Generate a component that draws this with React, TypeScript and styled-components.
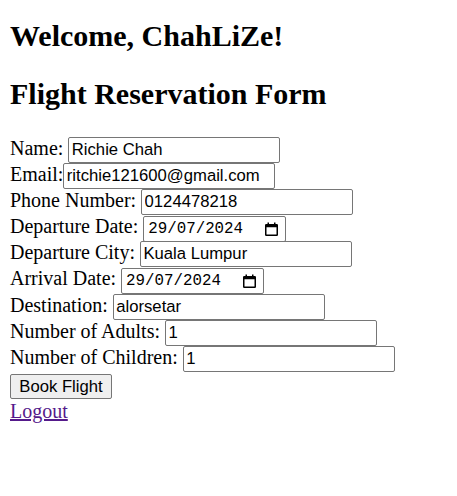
import React from "react";
import styled, { createGlobalStyle } from "styled-components";

const Global = createGlobalStyle`
  html, body {
    margin: 0;
    padding: 0;
    background: #fff;
  }
  body {
    font-family: "Liberation Serif", "Times New Roman", serif;
    font-size: 20px;
    color: #000;
  }
`;

const Page = styled.div`
  padding: 18px 10px 0;
`;

const Heading = styled.h2<{ $last?: boolean }>`
  font-size: 30px;
  font-weight: bold;
  line-height: 35px;
  margin: 0 0 ${(p) => (p.$last ? "26px" : "23px")};
`;

const Form = styled.form`
  margin: 0;
`;

const Row = styled.div`
  white-space: nowrap;
  line-height: normal;
  height: 26.1px;
`;

const Label = styled.label``;

const TextField = styled.input`
  font-family: "Liberation Sans", Arial, sans-serif;
  font-size: 16.67px;
  color: #000;
  width: 212px;
  height: 26px;
  box-sizing: border-box;
  padding: 0 2.5px;
  border: 1px solid #767676;
  border-radius: 2px;
  background: #fff;
  vertical-align: baseline;
  margin: 0;
  outline: none;
  &::-webkit-inner-spin-button,
  &::-webkit-outer-spin-button {
    -webkit-appearance: none;
    margin: 0;
  }
`;

const DateBox = styled.span`
  display: inline-flex;
  align-items: center;
  box-sizing: border-box;
  width: 143px;
  height: 26px;
  padding: 0 7px 0 4px;
  border: 1px solid #767676;
  border-radius: 2px;
  background: #fff;
  vertical-align: baseline;
`;

const DateText = styled.span`
  flex: 1;
  font-family: "Liberation Mono", "DejaVu Sans Mono", monospace;
  font-size: 15.8px;
  color: #000;
  line-height: 20px;
`;

const CalendarIcon = styled.svg`
  display: block;
  width: 13px;
  height: 14px;
  flex: none;
`;

const ButtonRow = styled.div`
  padding-top: 2px;
  height: 24px;
`;

const Button = styled.button`
  font-family: "Liberation Sans", Arial, sans-serif;
  font-size: 16.67px;
  color: #000;
  padding: 0 7px;
  height: 25px;
  width: 102px;
  box-sizing: border-box;
  border: 1px solid #767676;
  border-radius: 2px;
  background: #efefef;
  margin: 0;
`;

const LogoutLink = styled.a`
  display: inline-block;
  color: #551a8b;
  text-decoration: underline;
  line-height: 23px;
  margin-top: 2px;
`;

function DateField({ value }: { value: string }) {
  return (
    <DateBox>
      <DateText>{value}</DateText>
      <CalendarIcon viewBox="0 0 13 14">
        <rect x="0.75" y="2.75" width="11.5" height="10.5" rx="0.5" fill="none" stroke="#000" strokeWidth="1.5" />
        <rect x="0.75" y="2.75" width="11.5" height="2.5" fill="#000" />
        <rect x="2.5" y="0.5" width="1.5" height="3" fill="#000" />
        <rect x="9" y="0.5" width="1.5" height="3" fill="#000" />
      </CalendarIcon>
    </DateBox>
  );
}

export default function App() {
  return (
    <Page>
      <Global />
      <Heading>Welcome, ChahLiZe!</Heading>
      <Heading $last>Flight Reservation Form</Heading>
      <Form onSubmit={(e) => e.preventDefault()}>
        <Row>
          <Label>Name: </Label>
          <TextField type="text" defaultValue="Richie Chah" />
        </Row>
        <Row>
          <Label>Email:</Label>
          <TextField type="text" defaultValue="ritchie121600@gmail.com" />
        </Row>
        <Row>
          <Label>Phone Number: </Label>
          <TextField type="text" defaultValue="0124478218" />
        </Row>
        <Row>
          <Label>Departure Date: </Label>
          <DateField value="29/07/2024" />
        </Row>
        <Row>
          <Label>Departure City: </Label>
          <TextField type="text" defaultValue="Kuala Lumpur" />
        </Row>
        <Row>
          <Label>Arrival Date: </Label>
          <DateField value="29/07/2024" />
        </Row>
        <Row>
          <Label>Destination: </Label>
          <TextField type="text" defaultValue="alorsetar" />
        </Row>
        <Row>
          <Label>Number of Adults: </Label>
          <TextField type="number" defaultValue="1" />
        </Row>
        <Row>
          <Label>Number of Children: </Label>
          <TextField type="number" defaultValue="1" />
        </Row>
        <ButtonRow>
          <Button type="submit">Book Flight</Button>
        </ButtonRow>
      </Form>
      <LogoutLink href="#">Logout</LogoutLink>
    </Page>
  );
}
